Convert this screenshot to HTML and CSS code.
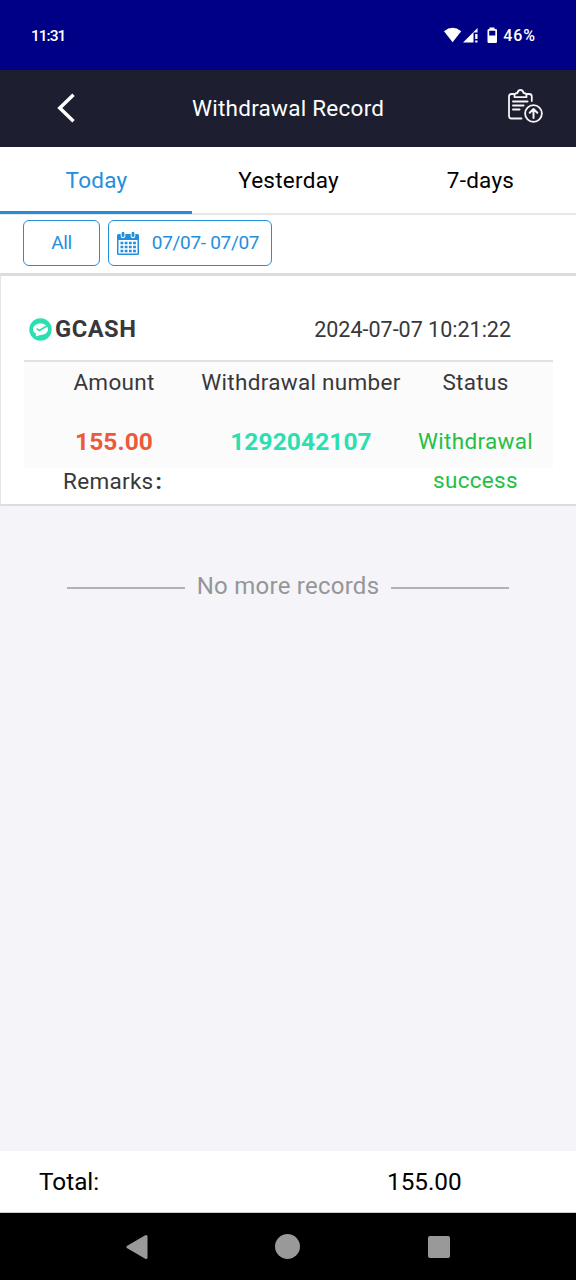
FILE: index.html
```html
<!DOCTYPE html>
<html lang="en">
<head>
<meta charset="utf-8">
<title>Withdrawal Record</title>
<link rel="stylesheet" href="styles.css">
</head>
<body>
<div class="screen">
  <div class="status-bar">
    <span class="clock">11:31</span>
    <div class="indicators">
      <svg class="signals" width="56" height="20" viewBox="0 0 56 20" fill="#fff">
        <path d="M0 6.200Q8.500-.6 17.200 6.200L8.600 17.200Z"/>
        <path d="M19 17.500L33.500 3V7.500H29.500V17.500Z"/>
        <path d="M31.200 9H33.500V14H31.200ZM31.200 15.500H33.500V17.500H31.200Z"/>
        <path fill-rule="evenodd" d="M45.500 2.500H50.500V4H51.500Q53 4 53 5V16.800Q53 18 51.800 18H44.700Q43.500 18 43.500 16.800V5Q43.500 4 45.500 4ZM45.200 5.800V10.500H51.300V5.800Z"/>
      </svg>
      <span class="battery">46%</span>
    </div>
  </div>

  <header class="header">
    <svg class="back" width="20" height="30" viewBox="0 0 20 30" fill="none" stroke="#fff" stroke-width="3.500"><path d="M17.500 1.800L3.800 15L17.500 28.200"/></svg>
    <h1 class="title">Withdrawal Record</h1>
    <svg class="report" width="36" height="36" viewBox="0 0 36 36" fill="none" stroke="#f5f5f2" stroke-width="1.800" stroke-linecap="round" stroke-linejoin="round">
      <path d="M7 5H4.500Q2 5 2 7.500V27Q2 29.500 4.500 29.500H14.500M19.500 5H22Q24.800 5 24.800 7.500V12"/>
      <path d="M7.500 8.200Q7 4 10.500 4Q11 1 13.500 1Q16 1 16.500 4Q20 4 19.500 8.200Z"/>
      <path d="M6 12.600H20.500M6 16.600H16.500M6 20.600H12.500" stroke-width="2"/>
      <circle cx="26.500" cy="24.500" r="8.400"/>
      <path d="M26.500 29V20.500M22.700 23.800L26.500 20L30.300 23.800" stroke-width="2"/>
    </svg>
  </header>

  <nav class="tabs">
    <div class="tab active">Today</div>
    <div class="tab">Yesterday</div>
    <div class="tab">7-days</div>
  </nav>

  <div class="filters">
    <div class="filter all">All</div>
    <div class="filter dates">
      <svg width="22" height="23" viewBox="0 0 22 23">
        <path fill="#238fdc" fill-rule="evenodd" d="M1.500 2H20.500Q22 2 22 3.500V21.500Q22 23 20.500 23H1.500Q0 23 0 21.500V3.500Q0 2 1.500 2ZM1.500 8V21.500H20.500V8Z"/>
        <path d="M6 0V4M16 0V4" stroke="#fff" stroke-width="4.600" stroke-linecap="round"/>
        <path d="M6 1.200V3.700M16 1.200V3.700" stroke="#238fdc" stroke-width="2.800" stroke-linecap="round"/>
        <path d="M3.500 11H19M3.500 15H19M3.500 19H19" stroke="#238fdc" stroke-width="2.500" stroke-dasharray="2.800 1.400"/>
      </svg>
      <span>07/07- 07/07</span>
    </div>
  </div>

  <main class="content">
    <section class="card">
      <div class="card-head">
        <div class="method">
          <svg width="24" height="24" viewBox="0 0 24 24">
            <circle cx="12.500" cy="12.500" r="11.200" fill="#2bdfb0"/>
            <path fill="#fff" d="M12.500 6.400C17 6.400 20 8.900 20 12.300S16.700 18 12.500 18L7.800 19.300L8 16.700C6 15.500 5 14 5 12.300C5 8.900 8.200 6.400 12.500 6.400Z"/>
            <path d="M8.500 11.700L11.300 13.500L19.700 8.500" fill="none" stroke="#2bdfb0" stroke-width="1.600"/>
          </svg>
          <strong>GCASH</strong>
        </div>
        <time class="time">2024-07-07 10:21:22</time>
      </div>
      <div class="details">
        <div class="col amount"><span class="label">Amount</span><b>155.00</b></div>
        <div class="col number"><span class="label">Withdrawal number</span><b>1292042107</b></div>
        <div class="col state"><span class="label">Status</span><span class="result">Withdrawal success</span></div>
      </div>
      <div class="remarks">Remarks<span class="colon">:</span></div>
    </section>
    <div class="end"><span>No more records</span></div>
  </main>

  <footer class="total"><span>Total:</span><span class="sum">155.00</span></footer>

  <div class="nav-bar">
    <svg width="22" height="26" viewBox="0 0 22 26"><path d="M2 13L20 2.500V23.500Z" fill="#999" stroke="#999" stroke-width="3" stroke-linejoin="round"/></svg>
    <div class="home"></div>
    <div class="recent"></div>
  </div>
</div>
</body>
</html>
```

FILE: styles.css
```css
* { box-sizing: border-box; }

body {
  margin: 0;
  font-family: Roboto, "Liberation Sans", sans-serif;
  color: #000;
}

svg { display: block; flex: none; }

.screen {
  display: flex;
  flex-direction: column;
  width: 576px;
  height: 1280px;
  overflow: hidden;
  background: #f4f4f9;
  white-space: nowrap;
}

.status-bar {
  display: flex;
  align-items: center;
  justify-content: space-between;
  height: 70px;
  padding: 0 40px 0 31px;
  background: #000087;
  color: #fff;
  font-size: 16px;
  font-weight: 500;
}

.clock { padding-top: 1px; font-size: 15.5px; letter-spacing: -1px; }
.indicators { display: flex; align-items: center; gap: 3px; }
.battery { letter-spacing: 0.9px; }

.header {
  display: flex;
  align-items: center;
  height: 77px;
  padding: 0 33px 2px 56px;
  background: #1d1f31;
  color: #fff;
}

.title {
  flex: 1;
  margin: 0 0 0 116px;
  font-size: 22.5px;
  font-weight: 400;
  letter-spacing: 0.25px;
}

.report { margin-top: -1px; }

.tabs {
  display: grid;
  grid-template-columns: repeat(3, 1fr);
  height: 68px;
  background: #fff;
  box-shadow: inset 0 -2px #e8e8e8;
  font-size: 22.5px;
  letter-spacing: 0.25px;
  line-height: 66px;
  text-align: center;
}

.tab { height: 67px; padding-left: 1px; }

.active {
  border-bottom: 3px solid #238fdc;
  color: #238fdc;
}

.filters {
  display: flex;
  gap: 8px;
  height: 58px;
  padding: 5px 23px 0;
  background: #fff;
}

.filter {
  display: flex;
  align-items: center;
  justify-content: center;
  height: 46px;
  padding-bottom: 1px;
  border: 1px solid #238fdc;
  border-radius: 6px;
  color: #238fdc;
  font-size: 19px;
  letter-spacing: -0.3px;
}

.filter svg { margin-top: 1px; }
.all { width: 77px; }
.dates { width: 164px; gap: 13px; padding-right: 4px; }

.content { flex: 1; }

.card {
  height: 233px;
  padding: 0 23px;
  background: #fff;
  border-top: 3px solid #dcdcdc;
  border-bottom: 2px solid #dcdcdc;
  border-left: 1px solid #e4e4e4;
  color: #38383b;
}

.card-head {
  display: flex;
  align-items: center;
  justify-content: space-between;
  height: 86px;
  padding: 22px 42px 0 4px;
  border-bottom: 2px solid #e2e2e2;
}

.method { display: flex; align-items: center; gap: 3px; font-size: 23.7px; letter-spacing: 0.5px; }
.time { font-size: 21.5px; }

.details {
  display: grid;
  grid-template-columns: 180px 194px 155px;
  height: 106px;
  padding-top: 1px;
  background: #fbfbfc;
  font-size: 22.5px;
  letter-spacing: 0.3px;
  text-align: center;
}

.col { display: flex; flex-direction: column; gap: 20px; line-height: 39px; }
.label { height: 39px; }
.number .label { margin: 0 -4px; }
.col b { font-size: 24.5px; letter-spacing: 0.1px; }
.amount b { color: #ec5a3c; }
.number b { color: #2bdfb0; }
.result { color: #24c044; white-space: normal; }

.remarks {
  padding-left: 39px;
  font-size: 22.5px;
  letter-spacing: 0.3px;
  line-height: 27px;
}

.colon { margin-left: 2px; font-weight: 700; }

.end {
  display: flex;
  align-items: center;
  gap: 12px;
  margin: 64px 67px 0;
  color: #969698;
  font-size: 24px;
  letter-spacing: 0.25px;
  line-height: 32px;
}

.end::before,
.end::after {
  content: "";
  flex: 1;
  height: 2px;
  margin-top: 3px;
  background: #b2b2b6;
}

.total {
  display: grid;
  grid-template-columns: 348px 1fr;
  height: 62px;
  padding: 0 39px;
  border-bottom: 1px solid #ccc;
  background: #fff;
  font-size: 24.3px;
  line-height: 61px;
}

.nav-bar {
  display: flex;
  align-items: center;
  justify-content: space-between;
  height: 67px;
  padding: 0 126px;
  background: #000;
}

.home { width: 25px; height: 25px; margin-right: 1px; border-radius: 50%; background: #999; }
.recent { width: 22px; height: 22px; border-radius: 2px; background: #999; }
```
